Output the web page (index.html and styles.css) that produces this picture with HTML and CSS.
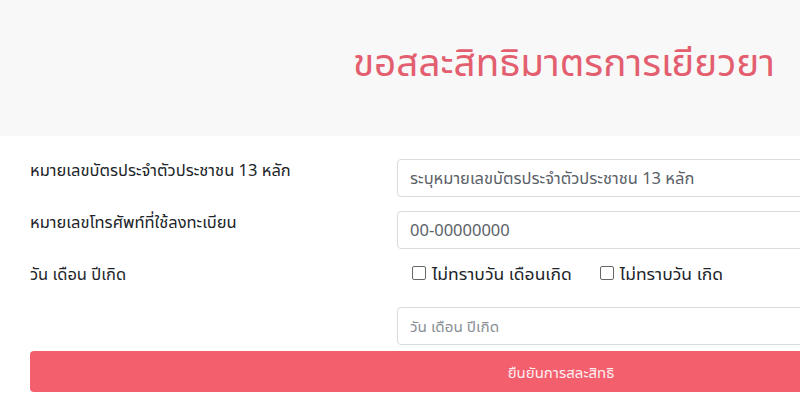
FILE: index.html
```html
<!DOCTYPE html>
<html lang="th">
<head>
<meta charset="utf-8">
<link rel="stylesheet" href="styles.css">
</head>
<body>
<header class="hero">
  <h1 class="hero-title">ขอสละสิทธิมาตรการเยียวยา</h1>
</header>
<main class="form">
  <div class="row">
    <label class="label">หมายเลขบัตรประจำตัวประชาชน 13 หลัก</label>
    <div class="field"><div class="input placeholder">ระบุหมายเลขบัตรประจำตัวประชาชน 13 หลัก</div></div>
  </div>
  <div class="row">
    <label class="label">หมายเลขโทรศัพท์ที่ใช้ลงทะเบียน</label>
    <div class="field"><div class="input placeholder">00-00000000</div></div>
  </div>
  <div class="row">
    <label class="label">วัน เดือน ปีเกิด</label>
    <div class="field">
      <div class="checks">
        <span class="check"><span class="box"></span>ไม่ทราบวัน เดือนเกิด</span>
        <span class="check"><span class="box"></span>ไม่ทราบวัน เกิด</span>
      </div>
      <div class="input placeholder date">วัน เดือน ปีเกิด</div>
    </div>
  </div>
  <button class="submit">ยืนยันการสละสิทธิ</button>
</main>
</body>
</html>
```
FILE: styles.css
```css
html, body { margin: 0; padding: 0; }
body {
  width: 800px;
  height: 408px;
  overflow: hidden;
  background: #fff;
  font-family: "Noto Sans Thai UI", "Noto Sans Thai", "Noto Sans", sans-serif;
  color: #212529;
}
.hero {
  height: 136px;
  background: #f8f8f8;
  display: flex;
  justify-content: flex-end;
  padding-right: 25px;
  box-sizing: border-box;
}
.hero-title {
  margin: 36px 0 0;
  font-size: 38.7px;
  font-weight: 400;
  color: #e35f70;
  line-height: 50px;
}
.form {
  width: 1062px;
  margin-left: 30px;
  padding-top: 23px;
}
.row {
  display: grid;
  grid-template-columns: 367px 1fr;
}
.label {
  font-size: 16.5px;
  font-weight: 400;
  line-height: 22px;
  padding-top: 0;
}
.field { display: flex; flex-direction: column; }
.input {
  height: 38px;
  box-sizing: border-box;
  border: 1px solid #d9dcdf;
  border-radius: 4px;
  padding: 0 12px;
  display: flex;
  align-items: center;
  font-size: 16.5px;
  margin-bottom: 14px;
}
.placeholder { color: #5a6167; }
.checks {
  display: flex;
  gap: 28px;
  height: 44px;
  align-items: center;
  padding-left: 15px;
  margin-top: -12px;
  margin-bottom: 12px;
  font-size: 17.5px;
}
.check { display: flex; align-items: center; gap: 6px; }
.box {
  width: 12px; height: 12px;
  border: 1px solid #666;
  border-radius: 2px;
}
.date { margin-bottom: 6px; color: #8a9095; font-size: 15.3px; }
.submit {
  display: block;
  width: 100%;
  height: 41px;
  border: 0;
  border-radius: 4px;
  background: #f45f6e;
  color: #fdeef0;
  font-family: inherit;
  font-size: 15px;
}
```
